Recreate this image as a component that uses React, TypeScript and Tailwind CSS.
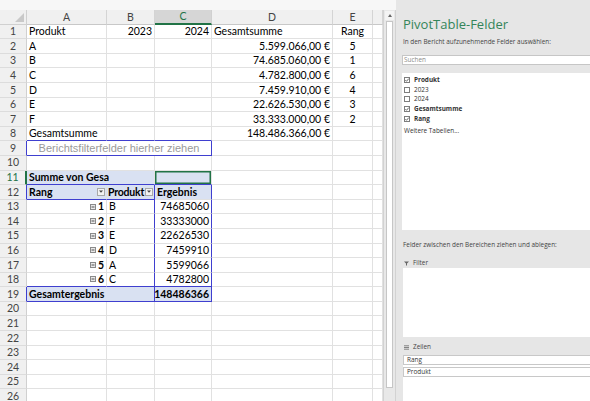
import React from "react";

type CellProps = {
  w: string;
  r?: string;
  b?: string;
  cls?: string;
  children?: React.ReactNode;
};

// one worksheet cell; r / b set the colour of the right and bottom edge
const Cell = ({ w, r = "border-r-[#e1e1e1]", b = "border-b-[#e1e1e1]", cls = "", children }: CellProps) => (
  <div
    className={`${w} ${r} ${b} ${cls} flex h-full shrink-0 items-center overflow-visible whitespace-nowrap border-r border-b`}
  >
    {children}
  </div>
);

const colW = ["w-[80px]", "w-[48px]", "w-[57px]", "w-[121px]", "w-[40px]", "w-[10px]"];
const letters = ["A", "B", "C", "D", "E", ""];

const RowHead = ({ n, cls = "" }: { n: number; cls?: string }) => (
  <div
    className={`flex h-full w-[27px] shrink-0 items-center justify-center border-r border-b border-b-[#dcdcdc] bg-[#f0f0f0] text-[#444] ${cls}`}
  >
    {n}
  </div>
);

const Row = ({ children }: { children: React.ReactNode }) => (
  <div className="flex h-[14.6px] shrink-0">{children}</div>
);

const MinusBox = () => (
  <svg width="6" height="6" viewBox="0 0 6 6" className="mr-[2px] shrink-0">
    <rect x="0.5" y="0.5" width="5" height="5" fill="#e8e8e8" stroke="#8a8a8a" />
    <line x1="1.5" y1="3" x2="4.5" y2="3" stroke="#555" />
  </svg>
);

const DropBtn = () => (
  <div className="ml-auto mr-[1px] flex h-[8px] w-[8px] shrink-0 items-center justify-center border border-[#a8a8a8] bg-[#f2f2f2]">
    <svg width="4" height="3" viewBox="0 0 4 3">
      <path d="M0 0.5 L4 0.5 L2 2.8 Z" fill="#444" />
    </svg>
  </div>
);

const Check = ({ on }: { on: boolean }) => (
  <svg width="6" height="6" viewBox="0 0 6 6" className="shrink-0">
    <rect x="0.5" y="0.5" width="5" height="5" fill="#fff" stroke="#7d7d7d" />
    {on && <path d="M1.3 3.1 L2.5 4.3 L4.8 1.6" fill="none" stroke="#444" strokeWidth="0.8" />}
  </svg>
);

const products = ["A", "B", "C", "D", "E", "F"];
const totals = [
  "5.599.066,00 €",
  "74.685.060,00 €",
  "4.782.800,00 €",
  "7.459.910,00 €",
  "22.626.530,00 €",
  "33.333.000,00 €",
];
const ranks = [5, 1, 6, 4, 3, 2];
const pivot: [number, string, number][] = [
  [1, "B", 74685060],
  [2, "F", 33333000],
  [3, "E", 22626530],
  [4, "D", 7459910],
  [5, "A", 5599066],
  [6, "C", 4782800],
];

const Sheet = () => {
  const empty = (from: number) =>
    colW.slice(from).map((w, i) => <Cell key={from + i} w={w} />);

  return (
    <div className="flex w-[383px] flex-col overflow-hidden bg-white text-[10.5px] leading-none text-black">
      {/* column headers */}
      <div className="flex h-[14.6px] shrink-0">
        <div className="relative h-full w-[27px] shrink-0 border-r border-b border-[#d0d0d0] bg-[#f0f0f0]">
          <svg width="9" height="9" viewBox="0 0 9 9" className="absolute right-[2px] bottom-[2px]">
            <path d="M9 0 L9 9 L0 9 Z" fill="#c9c9c9" />
          </svg>
        </div>
        {colW.map((w, i) =>
          i === 2 ? (
            <div
              key={i}
              className={`${w} flex h-full shrink-0 items-center justify-center border-r border-r-[#d0d0d0] border-b-2 border-b-[#217346] bg-[#d6d6d6] text-[#217346]`}
            >
              {letters[i]}
            </div>
          ) : (
            <div
              key={i}
              className={`${w} flex h-full shrink-0 items-center justify-center border-r border-b border-r-[#d4d4d4] border-b-[#c8c8c8] bg-[#f0f0f0] text-[#444]`}
            >
              {letters[i]}
            </div>
          )
        )}
      </div>

      {/* row 1 */}
      <Row>
        <RowHead n={1} cls="border-r-[#d0d0d0]" />
        <Cell w={colW[0]} cls="pl-[2px]">Produkt</Cell>
        <Cell w={colW[1]} cls="justify-end pr-[2px]">2023</Cell>
        <Cell w={colW[2]} cls="justify-end pr-[2px]">2024</Cell>
        <Cell w={colW[3]} cls="pl-[2px]">Gesamtsumme</Cell>
        <Cell w={colW[4]} cls="justify-center">Rang</Cell>
        <Cell w={colW[5]} />
      </Row>

      {/* rows 2-7 */}
      {products.map((p, i) => (
        <Row key={p}>
          <RowHead n={i + 2} cls="border-r-[#d0d0d0]" />
          <Cell w={colW[0]} cls="pl-[2px]">{p}</Cell>
          <Cell w={colW[1]} />
          <Cell w={colW[2]} />
          <Cell w={colW[3]} cls="justify-end pr-[2px]">{totals[i]}</Cell>
          <Cell w={colW[4]} cls="justify-center">{ranks[i]}</Cell>
          <Cell w={colW[5]} />
        </Row>
      ))}

      {/* row 8 */}
      <Row>
        <RowHead n={8} cls="border-r-[#d0d0d0]" />
        <Cell w={colW[0]} b="border-b-[#3f3fcf]" cls="pl-[2px]">Gesamtsumme</Cell>
        <Cell w={colW[1]} b="border-b-[#3f3fcf]" />
        <Cell w={colW[2]} b="border-b-[#3f3fcf]" />
        <Cell w={colW[3]} cls="justify-end pr-[2px]">148.486.366,00 €</Cell>
        <Cell w={colW[4]} />
        <Cell w={colW[5]} />
      </Row>

      {/* row 9: report filter drop zone */}
      <Row>
        <RowHead n={9} cls="border-r-[#3f3fcf]" />
        <Cell
          w="w-[185px]"
          r="border-r-[#3f3fcf]"
          b="border-b-[#3f3fcf]"
          cls="justify-center font-['Liberation_Sans',sans-serif] text-[11px] text-[#9a9a9a]"
        >
          Berichtsfilterfelder hierher ziehen
        </Cell>
        {empty(3)}
      </Row>

      {/* row 10 */}
      <Row>
        <RowHead n={10} cls="border-r-[#d0d0d0]" />
        {empty(0)}
      </Row>

      {/* row 11 */}
      <Row>
        <RowHead n={11} cls="border-r-2 border-r-[#217346] bg-[#d6d6d6] text-[#217346]" />
        <Cell w="w-[128px]" b="border-b-[#3f3fcf]" cls="bg-[#d9e1f2] pl-[2px] font-bold">
          Summe von Gesa
        </Cell>
        <Cell
          w={colW[2]}
          b="border-b-[#3f3fcf]"
          cls="bg-[#d9e1f2] shadow-[inset_0_0_0_1.5px_#217346]"
        />
        {empty(3)}
      </Row>

      {/* row 12 */}
      <Row>
        <RowHead n={12} cls="border-r-[#3f3fcf]" />
        <Cell w={colW[0]} b="border-b-[#3f3fcf]" cls="bg-[#d9e1f2] pl-[2px] font-bold">
          Rang
          <DropBtn />
        </Cell>
        <Cell
          w={colW[1]}
          r="border-r-[#3f3fcf]"
          b="border-b-[#3f3fcf]"
          cls="bg-[#d9e1f2] pl-[1px] font-bold tracking-[-0.2px]"
        >
          Produkt
          <DropBtn />
        </Cell>
        <Cell w={colW[2]} r="border-r-[#3f3fcf]" cls="bg-[#d9e1f2] pl-[2px] font-bold">
          Ergebnis
        </Cell>
        {empty(3)}
      </Row>

      {/* rows 13-18 */}
      {pivot.map(([rank, prod, val], i) => {
        const last = i === pivot.length - 1;
        const bb = last ? "border-b-[#3f3fcf]" : "border-b-[#e1e1e1]";
        return (
          <Row key={rank}>
            <RowHead n={13 + i} cls="border-r-[#d0d0d0]" />
            <Cell w={colW[0]} b={bb} cls="justify-end pr-[2px]">
              <MinusBox />
              <span className="font-bold">{rank}</span>
            </Cell>
            <Cell w={colW[1]} r="border-r-[#3f3fcf]" b={bb} cls="pl-[2px]">
              {prod}
            </Cell>
            <Cell w={colW[2]} r="border-r-[#3f3fcf]" b={bb} cls="justify-end pr-[2px]">
              {val}
            </Cell>
            {empty(3)}
          </Row>
        );
      })}

      {/* row 19 */}
      <Row>
        <RowHead n={19} cls="border-r-[#3f3fcf]" />
        <Cell w="w-[128px]" r="border-r-[#3f3fcf]" b="border-b-[#3f3fcf]" cls="bg-[#d9e1f2] pl-[2px] font-bold">
          Gesamtergebnis
        </Cell>
        <Cell w={colW[2]} r="border-r-[#3f3fcf]" b="border-b-[#3f3fcf]" cls="justify-end bg-[#d9e1f2] pr-[2px] font-bold">
          148486366
        </Cell>
        {empty(3)}
      </Row>

      {/* rows 20-26 */}
      {[20, 21, 22, 23, 24, 25, 26].map((n) => (
        <Row key={n}>
          <RowHead n={n} cls="border-r-[#d0d0d0]" />
          {empty(0)}
        </Row>
      ))}
    </div>
  );
};

const Scrollbar = () => (
  <div className="flex w-[13px] shrink-0 flex-col border-l border-r border-[#d2d2d2] bg-[#e8e8e8]">
    <div className="mx-[1px] mt-[1px] flex h-[9px] items-center justify-center bg-[#f4f4f4]">
      <svg width="4" height="3" viewBox="0 0 4 3">
        <path d="M0 3 L4 3 L2 0 Z" fill="#666" />
      </svg>
    </div>
    <div className="mx-[2px] mt-[1px] mb-[13px] flex-1 border border-[#c6c6c6] bg-white" />
  </div>
);

const FieldItem = ({ label, on, bold }: { label: string; on: boolean; bold?: boolean }) => (
  <div className="flex h-[9.7px] items-center gap-[4px]">
    <Check on={on} />
    <span className={bold ? "font-bold" : ""}>{label}</span>
  </div>
);

const Panel = () => (
  <div className="flex min-w-0 flex-1 flex-col overflow-hidden bg-[#e6e6e6] pl-[6px] font-['Open_Sans',sans-serif] text-[6.4px] leading-[8px] text-[#444]">
    <div className="mt-[16px] pl-[1px] text-[13px] leading-[16px] text-[#34855a]">
      PivotTable-Felder
    </div>
    <div className="mt-[6px] pl-[1px]">In den Bericht aufzunehmende Felder auswählen:</div>
    <div className="mt-[9px] -mr-[2px] flex h-[10px] items-center border border-[#c6c6c6] bg-white pl-[1px] text-[#8a8a8a]">
      Suchen
    </div>
    <div className="mt-[8px] -mr-[2px] h-[157px] shrink-0 bg-white pt-[2px] pl-[2px] text-[#333]">
      <FieldItem label="Produkt" on bold />
      <FieldItem label="2023" on={false} />
      <FieldItem label="2024" on={false} />
      <FieldItem label="Gesamtsumme" on bold />
      <FieldItem label="Rang" on bold />
      <div className="mt-[3px] flex h-[9.7px] items-center">Weitere Tabellen...</div>
    </div>
    <div className="mt-[11px] pl-[1px]">Felder zwischen den Bereichen ziehen und ablegen:</div>
    <div className="mt-[10px] flex h-[8px] items-center gap-[4px] pl-[2px]">
      <svg width="5" height="5" viewBox="0 0 5 5">
        <path d="M0 0.5 L5 0.5 L3 2.6 L3 4.8 L2 4.2 L2 2.6 Z" fill="#666" />
      </svg>
      <span>Filter</span>
    </div>
    <div className="mt-[1px] -mr-[2px] ml-[1px] h-[69px] shrink-0 bg-white" />
    <div className="mt-[6px] flex h-[8px] items-center gap-[4px] pl-[2px]">
      <svg width="5" height="5" viewBox="0 0 5 5">
        <path d="M0 0.8 H5 M0 2.5 H5 M0 4.2 H5" stroke="#777" strokeWidth="0.9" />
      </svg>
      <span>Zeilen</span>
    </div>
    <div className="mt-[4px] -mr-[2px] ml-[1px] flex flex-1 flex-col gap-[2px] bg-white text-[#333]">
      <div className="flex h-[10px] items-center border border-[#c8c8c8] pl-[3px]">Rang</div>
      <div className="flex h-[10px] items-center border border-[#c8c8c8] pl-[3px]">Produkt</div>
    </div>
  </div>
);

export default function App() {
  return (
    <div className="flex h-[401px] w-[590px] overflow-hidden bg-white font-['Lato',sans-serif]">
      <div className="flex w-[396px] shrink-0 flex-col">
        <div className="h-[10px] shrink-0 bg-[#f7f7f7]" />
        <div className="flex min-h-0 flex-1">
          <Sheet />
          <Scrollbar />
        </div>
      </div>
      <Panel />
    </div>
  );
}
